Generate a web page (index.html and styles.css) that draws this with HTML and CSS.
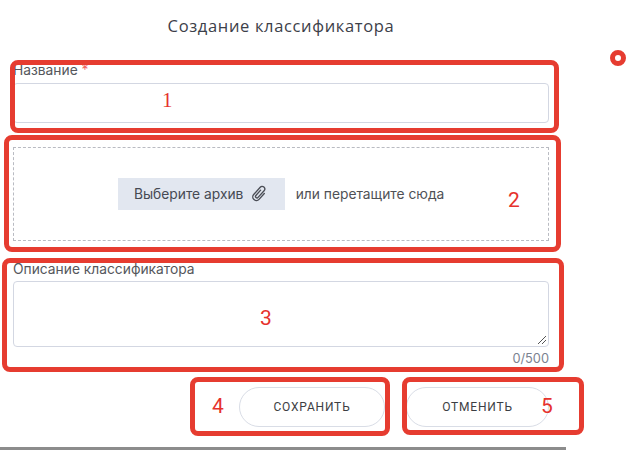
FILE: index.html
```html
<!DOCTYPE html>
<html lang="ru">
<head>
<meta charset="utf-8">
<title>Создание классификатора</title>
<link rel="stylesheet" href="styles.css">
</head>
<body>
<main class="modal">
  <h1 class="title">Создание классификатора</h1>
  <div class="field name-field">
    <label class="label">Название <span class="req">*</span></label>
    <div class="input"></div>
  </div>
  <div class="drop">
    <button class="pick">Выберите архив
      <svg class="clip" width="18" height="18" viewBox="0 0 16 16" fill="none" stroke="#4a4d55" stroke-width="1.200" stroke-linecap="round" stroke-linejoin="round"><path transform="rotate(42 8 8)" d="M11.200 4.500V11.500a3.200 3.200 0 0 1-6.400 0V2.800a2.300 2.300 0 0 1 4.600 0V10.800a1.300 1.300 0 0 1-2.600 0V4.500"/></svg>
    </button>
    <span class="drop-text">или перетащите сюда</span>
  </div>
  <div class="field desc-field">
    <label class="label">Описание классификатора</label>
    <div class="textarea">
      <svg class="grip" width="10" height="10" viewBox="0 0 10 10" stroke="#555" stroke-width="1"><path d="M1 9 9 1M5 9 9 5"/></svg>
    </div>
    <div class="count">0/500</div>
  </div>
  <div class="actions">
    <button class="btn save">СОХРАНИТЬ</button>
    <button class="btn cancel">ОТМЕНИТЬ</button>
  </div>
</main>
<div class="mark m1"></div>
<div class="mark m2"></div>
<div class="mark m3"></div>
<div class="mark m4"></div>
<div class="mark m5"></div>
<span class="num n1">1</span>
<span class="num n2">2</span>
<span class="num n3">3</span>
<span class="num n4">4</span>
<span class="num n5">5</span>
<div class="dot"></div>
</body>
</html>
```
FILE: styles.css
```css
html, body {
  margin: 0;
  height: 450px;
  overflow: hidden;
  background: #fff;
}
body {
  position: relative;
  font-family: Inter, "Liberation Sans", sans-serif;
  color: #4d4f55;
}
.modal {
  box-sizing: border-box;
  width: 566px;
  height: 450px;
  padding: 16px 17px 0 13px;
  border-bottom: 3px solid #8c8c8c;
  display: flex;
  flex-direction: column;
}
.title {
  margin: 0;
  height: 20px;
  font: 400 16.500px/20px "Open Sans", sans-serif;
  letter-spacing: .65px;
  color: #3c4049;
  text-align: center;
}
.field { display: flex; flex-direction: column; }
.name-field { margin-top: 26px; }
.label {
  font-size: 13.800px;
  line-height: 16px;
  color: #55575c;
}
.req { color: #f0635f; }
.input {
  height: 38px;
  margin-top: 5px;
  border: 1px solid #d3d7e2;
  border-radius: 4px;
}
.drop {
  margin-top: 24px;
  height: 94px;
  box-sizing: border-box;
  border: 1px dashed #b9bbc2;
  display: flex;
  align-items: center;
  justify-content: center;
  gap: 11px;
}
.pick {
  width: 167px;
  height: 32px;
  padding: 0;
  border: 0;
  background: #e2e7f0;
  font: 400 13.800px Inter, sans-serif;
  color: #464a53;
  display: flex;
  align-items: center;
  justify-content: center;
  gap: 7px;
}
.drop-text { font-size: 13.800px; color: #4f5156; }
.desc-field { margin-top: 20px; }
.textarea {
  position: relative;
  height: 64px;
  margin-top: 4px;
  border: 1px solid #d3d7e2;
  border-radius: 4px;
}
.grip { position: absolute; right: 1px; bottom: 1px; }
.count {
  margin-top: 4px;
  font-size: 12.800px;
  line-height: 16px;
  text-align: right;
  color: #7b8290;
}
.actions {
  margin-top: 20px;
  display: flex;
  justify-content: flex-end;
  gap: 21px;
}
.btn {
  height: 40px;
  padding: 0;
  border: 1px solid #d9dde6;
  border-radius: 20px;
  background: #fff;
  font: 400 12px Roboto, sans-serif;
  letter-spacing: .8px;
  color: #3c3e43;
}
.save { width: 146px; }
.cancel { width: 143px; }
.mark {
  position: absolute;
  box-sizing: border-box;
  border: 5px solid #e63c30;
  border-radius: 8px;
}
.m1 { left: 10px; top: 60px; width: 549px; height: 73px; }
.m2 { left: 4px; top: 135px; width: 557px; height: 117px; }
.m3 { left: 2px; top: 258px; width: 562px; height: 114px; }
.m4 { left: 190px; top: 377px; width: 200px; height: 59px; }
.m5 { left: 402px; top: 377px; width: 182px; height: 58px; }
.num {
  position: absolute;
  font: 400 21px/22px Roboto, sans-serif;
  color: #e6322c;
}
.n1 { left: 162px; top: 89px; font-family: "Liberation Serif", serif; font-size: 21px; }
.n2 { left: 508px; top: 189px; }
.n3 { left: 260px; top: 307px; }
.n4 { left: 212px; top: 395px; }
.n5 { left: 541px; top: 395px; }
.dot {
  position: absolute;
  left: 610px;
  top: 50px;
  box-sizing: border-box;
  width: 16px;
  height: 16px;
  border: 5px solid #e63c30;
  border-radius: 50%;
}
```
